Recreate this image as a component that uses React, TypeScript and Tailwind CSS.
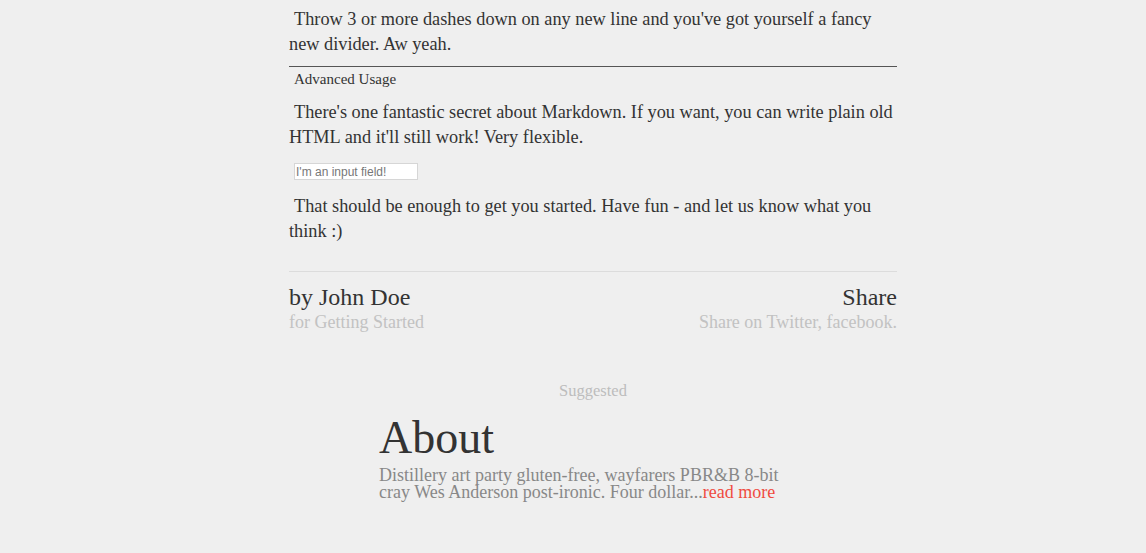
export default function App() {
  return (
    <div className="min-h-[553px] bg-[#efefef] pl-[40px] flex justify-center font-['Liberation_Serif',serif]">
      <div className="w-[608px] flex flex-col">
        <p className="mt-[7px] text-[18.3px] leading-[25px] text-[#333] indent-[5px]">
          Throw 3 or more dashes down on any new line and you've got yourself a fancy new divider. Aw yeah.
        </p>
        <hr className="mt-[9px] border-0 border-t border-[#555]" />
        <h4 className="mt-[2px] pl-[5px] text-[15px] leading-[20px] text-[#333]">Advanced Usage</h4>

        <p className="mt-[11px] text-[18.3px] leading-[25px] text-[#333] indent-[5px]">
          There's one fantastic secret about Markdown. If you want, you can write plain old HTML and it'll still work! Very flexible.
        </p>
        <div className="mt-[13px] pl-[5px]">
          <input
            type="text"
            placeholder="I'm an input field!"
            className="block w-[124px] h-[17px] bg-white border border-[#d6d6d6] px-[1px] text-[12px] font-['Liberation_Sans',sans-serif] placeholder:text-[#777] outline-none"
          />
        </div>
        <p className="mt-[14px] text-[18.3px] leading-[25px] text-[#333] indent-[5px]">
          That should be enough to get you started. Have fun - and let us know what you think :)
        </p>

        <div className="mt-[27px] border-t border-[#dcdcdc] flex justify-between pt-[12px]">
          <div>
            <div className="text-[24px] leading-[26px] text-[#333]">by John Doe</div>
            <div className="text-[18px] leading-[24px] text-[#c2c2c2]">for Getting Started</div>
          </div>
          <div className="text-right">
            <div className="text-[24px] leading-[26px] text-[#333]">Share</div>
            <div className="text-[18px] leading-[24px] text-[#c2c2c2]">Share on Twitter, facebook.</div>
          </div>
        </div>

        <div className="mt-[47px] text-center text-[16.5px] leading-[20px] text-[#bdbdbd]">Suggested</div>

        <div className="mt-[11px] pl-[90px] w-[520px]">
          <h2 className="text-[46px] leading-[52px] text-[#333]">About</h2>
          <p className="mt-[3px] text-[18px] leading-[17px] text-[#888] w-[420px]">
            Distillery art party gluten-free, wayfarers PBR&amp;B 8-bit cray Wes Anderson post-ironic. Four dollar...
            <a className="text-[#ef4b3f]">read more</a>
          </p>
        </div>
      </div>
    </div>
  );
}
